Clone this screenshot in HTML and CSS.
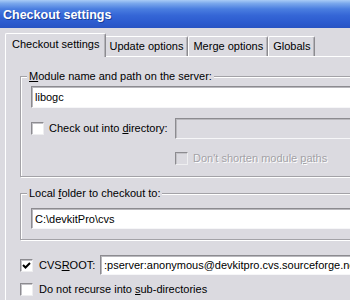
FILE: index.html
```html
<!DOCTYPE html>
<html lang="en">
<head>
  <meta charset="UTF-8"/>
  <title>Checkout settings</title>
  <link rel="stylesheet" href="styles.css">
</head>
<body>
  <div class="window">
    <div class="titlebar">Checkout settings</div>

    <div class="client">
      <div class="tabs">
        <div class="tab active">Checkout settings</div>
        <div class="tab">Update options</div>
        <div class="tab">Merge options</div>
        <div class="tab">Globals</div>
      </div>

      <div class="panel">
        <fieldset class="group">
          <legend><u>M</u>odule name and path on the server:</legend>
          <input class="field" type="text" value="libogc">
          <div class="dir-row">
            <label class="check dir-check"><span class="box"></span><span>Check out into <u>d</u>irectory:</span></label>
            <input class="field field-off" type="text" disabled>
          </div>
          <label class="check off shorten"><span class="box"></span><span>Don't shorten module <u>p</u>aths</span></label>
        </fieldset>

        <fieldset class="group group-local">
          <legend>Local <u>f</u>older to checkout to:</legend>
          <input class="field local-field" type="text" value="C:\devkitPro\cvs">
        </fieldset>

        <div class="cvs-row">
          <label class="check cvs-check">
            <span class="box"><svg width="9" height="9" viewBox="0 0 9 9"><path d="M1 4 L3.5 6.5 L8 2" fill="none" stroke="#000" stroke-width="2"/></svg></span>
            <span>CVS<u>R</u>OOT:</span>
          </label>
          <input class="field cvs-field" type="text" value=":pserver:anonymous@devkitpro.cvs.sourceforge.net:/cvsroot/devkitpro">
        </div>

        <label class="check recurse"><span class="box"></span><span>Do not recurse into <u>s</u>ub-directories</span></label>
      </div>
    </div>
  </div>
</body>
</html>
```

FILE: styles.css
```css
html,body{margin:0;overflow:hidden;}
body{background:#dbdae0;color:#000;font-family:'Liberation Sans',Arial,sans-serif;font-size:11px;}
.window{width:350px;height:300px;overflow:hidden;background:#dbdae0;}

.titlebar{height:28px;box-sizing:border-box;padding:2px 0 0 3px;line-height:26px;color:#fff;font-weight:bold;font-size:12.5px;
  background:linear-gradient(#a9ccf6 0,#7aa8ec 12%,#4a7ee0 32%,#3566d6 55%,#2c5bcf 80%,#2853c3 100%);
  text-shadow:1px 1px 0 #1b3f9a;}

.client{padding-left:5px;}
.tabs{display:flex;align-items:flex-end;margin-top:5px;margin-bottom:-1px;padding-left:2px;}
.tab{line-height:13px;padding:3px 4px;margin-bottom:1px;border:1px solid #fff;border-bottom:none;border-right-color:#8c8b90;
  border-radius:2px 2px 0 0;box-shadow:inset -1px 0 #b4b3b8;background:#dbdae0;white-space:nowrap;}
.tab.active{position:relative;z-index:1;padding:4px 6px 6px;margin:0 -2px;}

.panel{border-top:1px solid #fff;border-left:1px solid #fff;height:260px;margin-right:-60px;}

.group{margin:13px 0 0 14px;padding:3px 10px 11px 10px;border:1px solid #a3a2a7;box-shadow:inset 1px 1px #fff,1px 1px #fff;}
.group legend{margin-left:-4px;padding:0 2px;line-height:13px;background:#dbdae0;}
.group-local{margin-top:10px;padding-top:8px;padding-bottom:10px;}

.field{display:block;box-sizing:border-box;width:100%;height:22px;margin:0;padding:0 3px;font:11px 'Liberation Sans',Arial,sans-serif;color:#000;
  background:#fff;border:1px solid;border-color:#8c8b90 #f6f6f8 #f6f6f8 #8c8b90;box-shadow:inset 1px 1px #b9b8bd;outline:none;}
.field-off{background:#dbdae0;}
.local-field{height:21px;}

.check{display:flex;align-items:center;gap:5px;line-height:13px;white-space:nowrap;}
.box{display:flex;align-items:center;justify-content:center;flex:0 0 auto;width:13px;height:13px;box-sizing:border-box;background:#fff;
  border:1px solid;border-color:#8c8b90 #eeeef0 #eeeef0 #8c8b90;box-shadow:inset 1px 1px #c4c3c8;}
.off{color:#a3a2a7;text-shadow:1px 1px #fff;}
.off .box{background:#dbdae0;}

.dir-row{display:flex;align-items:center;margin-top:10px;}
.dir-check{flex:0 0 144px;}
.dir-row .field{flex:1;height:21px;}
.shorten{margin:13px 0 0 144px;}

.cvs-row{display:flex;align-items:center;margin:15px 0 0 14px;}
.cvs-check{flex:0 0 80px;gap:6px;}
.cvs-field{flex:1;height:20px;}
.recurse{margin:8px 0 0 14px;gap:6px;}
```
